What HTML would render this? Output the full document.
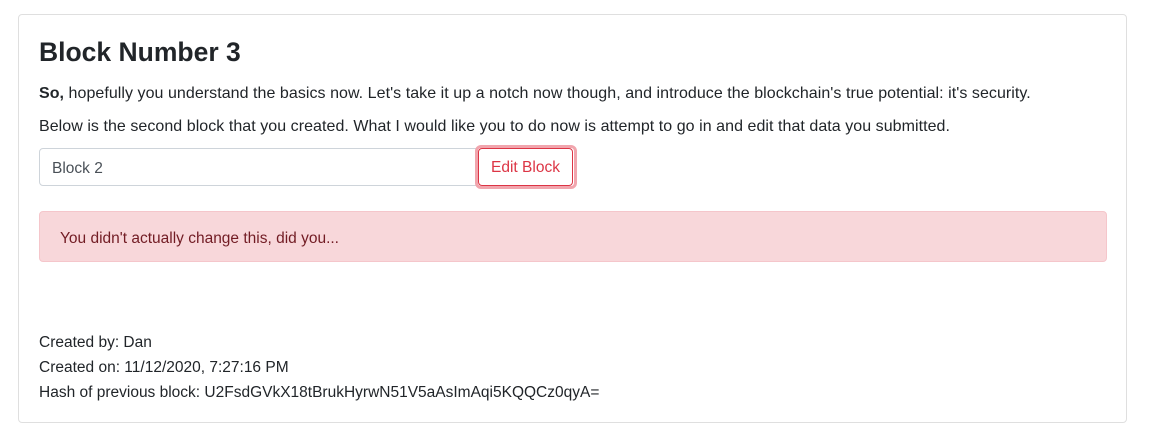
<!DOCTYPE html>
<html><head><style>
body{margin:0;background:#fff;font-family:"Liberation Sans",sans-serif;color:#212529;font-size:15px;}
.card{position:absolute;left:18px;top:14px;width:1107px;height:407px;border:1px solid rgba(0,0,0,.125);border-radius:4px;}
.abs{position:absolute;white-space:nowrap;}
h5{margin:0;font-size:26.5px;font-weight:bold;}
</style></head><body>
<div class="card"></div>
<div class="abs" style="left:39px;top:37px;"><h5>Block Number 3</h5></div>
<div class="abs" style="left:39px;top:85px;font-size:16px;letter-spacing:0.05px"><b>So,</b> hopefully you understand the basics now. Let's take it up a notch now though, and introduce the blockchain's true potential: it's security.</div>
<div class="abs" style="left:39px;top:118px;font-size:16px;letter-spacing:0.05px">Below is the second block that you created. What I would like you to do now is attempt to go in and edit that data you submitted.</div>
<div class="abs" style="left:39px;top:148px;width:437px;height:36px;border:1px solid #ced4da;border-radius:4px 0 0 4px;"></div>
<div class="abs" style="left:52px;top:160px;color:#495057;font-size:15.5px;">Block 2</div>
<div class="abs" style="left:475px;top:145px;width:96px;height:38px;border:3px solid #f1a5ad;border-radius:6px;"></div>
<div class="abs" style="left:478px;top:148px;border:1px solid #dc3545;border-radius:4px;box-sizing:border-box;width:95px;height:38px;color:#dc3545;text-align:center;line-height:38px;font-size:15.5px;">Edit Block</div>
<div class="abs" style="left:39px;top:211px;width:1066px;height:49px;background:#f8d7da;border:1px solid #f5c6cb;border-radius:4px;"></div>
<div class="abs" style="left:60px;top:230px;color:#721c24;font-size:15.5px;">You didn't actually change this, did you...</div>
<div class="abs" style="left:39px;top:330px;line-height:25px;font-size:15.5px;">Created by: Dan<br>Created on: 11/12/2020, 7:27:16 PM<br>Hash of previous block: U2FsdGVkX18tBrukHyrwN51V5aAsImAqi5KQQCz0qyA=</div>
</body></html>
